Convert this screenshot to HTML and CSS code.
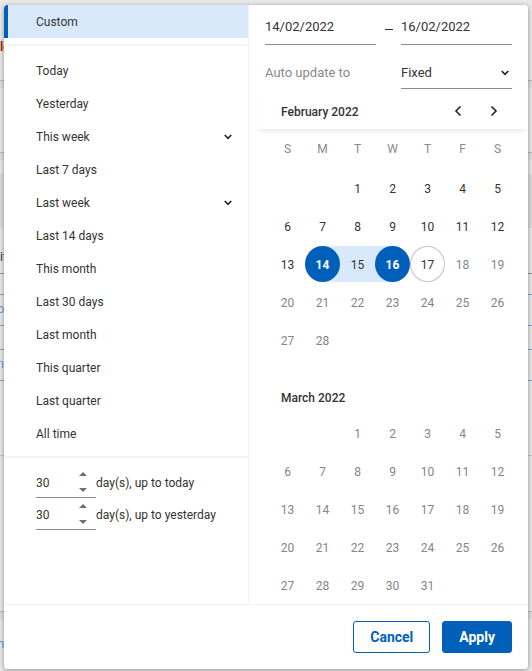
FILE: index.html
```html
<!DOCTYPE html>
<html lang="en">
<head>
<meta charset="utf-8">
<title>Date range</title>
<link rel="stylesheet" href="styles.css">
</head>
<body>
<div class="page" aria-hidden="true">
  <div class="card card-summary"><span class="peek peek-red">le</span></div>
  <div class="card card-filter"></div>
  <div class="card card-table">
    <div class="table-bar"></div>
    <div class="table-head"><span class="peek">it</span></div>
    <div class="chip"><span class="peek peek-blue">o</span></div>
    <div class="chip"><span class="peek peek-blue">n</span></div>
    <div class="table-foot"></div>
  </div>
  <div class="card card-last"><span class="peek peek-blue">h</span></div>
</div>

<div class="dialog" role="dialog" aria-label="Date range">
  <div class="panels">
    <div class="presets">
      <button class="preset selected" type="button">Custom</button>
      <div class="preset-list">
        <button class="preset" type="button">Today</button>
        <button class="preset" type="button">Yesterday</button>
        <button class="preset" type="button">This week<svg class="chevron" viewBox="0 0 8 6"><path d="M0.7 1L4 4.3L7.3 1"/></svg></button>
        <button class="preset" type="button">Last 7 days</button>
        <button class="preset" type="button">Last week<svg class="chevron" viewBox="0 0 8 6"><path d="M0.7 1L4 4.3L7.3 1"/></svg></button>
        <button class="preset" type="button">Last 14 days</button>
        <button class="preset" type="button">This month</button>
        <button class="preset" type="button">Last 30 days</button>
        <button class="preset" type="button">Last month</button>
        <button class="preset" type="button">This quarter</button>
        <button class="preset" type="button">Last quarter</button>
        <button class="preset" type="button">All time</button>
      </div>
      <div class="relative-list">
        <div class="relative">
          <div class="stepper">
            <input id="days-today" type="number" value="30">
            <div class="steps">
              <button type="button" aria-label="More days"><svg viewBox="0 0 8 4"><path d="M0 4L4 0L8 4Z"/></svg></button>
              <button type="button" aria-label="Fewer days"><svg viewBox="0 0 8 4"><path d="M0 0H8L4 4Z"/></svg></button>
            </div>
          </div>
          <label for="days-today">day(s), up to today</label>
        </div>
        <div class="relative">
          <div class="stepper">
            <input id="days-yesterday" type="number" value="30">
            <div class="steps">
              <button type="button" aria-label="More days"><svg viewBox="0 0 8 4"><path d="M0 4L4 0L8 4Z"/></svg></button>
              <button type="button" aria-label="Fewer days"><svg viewBox="0 0 8 4"><path d="M0 0H8L4 4Z"/></svg></button>
            </div>
          </div>
          <label for="days-yesterday">day(s), up to yesterday</label>
        </div>
      </div>
    </div>

    <div class="picker">
      <div class="fields">
        <input class="date" type="text" value="14/02/2022" aria-label="Start date">
        <span class="dash"></span>
        <input class="date" type="text" value="16/02/2022" aria-label="End date">
        <label class="update-label" for="update">Auto update to</label>
        <div class="select">
          <select id="update"><option>Fixed</option></select>
          <svg class="chevron" viewBox="0 0 8 6"><path d="M0.7 1L4 4.3L7.3 1"/></svg>
        </div>
      </div>
      <div class="calendar">
        <div class="month-bar">
          <h2>February 2022</h2>
          <button type="button" aria-label="Previous month"><svg viewBox="0 0 8 12"><path d="M6.5 1.5L2 6L6.5 10.5"/></svg></button>
          <button type="button" aria-label="Next month"><svg viewBox="0 0 8 12"><path d="M1.5 1.5L6 6L1.5 10.5"/></svg></button>
        </div>
        <table>
          <thead><tr><th>S</th><th>M</th><th>T</th><th>W</th><th>T</th><th>F</th><th>S</th></tr></thead>
          <tbody>
            <tr><td></td><td></td><td><button>1</button></td><td><button>2</button></td><td><button>3</button></td><td><button>4</button></td><td><button>5</button></td></tr>
            <tr><td><button>6</button></td><td><button>7</button></td><td><button>8</button></td><td><button>9</button></td><td><button>10</button></td><td><button>11</button></td><td><button>12</button></td></tr>
            <tr><td><button>13</button></td><td><div class="range-start"><button class="picked">14</button></div></td><td><button class="between">15</button></td><td><div class="range-end"><button class="picked">16</button></div></td><td><button class="today">17</button></td><td><button disabled>18</button></td><td><button disabled>19</button></td></tr>
            <tr><td><button disabled>20</button></td><td><button disabled>21</button></td><td><button disabled>22</button></td><td><button disabled>23</button></td><td><button disabled>24</button></td><td><button disabled>25</button></td><td><button disabled>26</button></td></tr>
            <tr><td><button disabled>27</button></td><td><button disabled>28</button></td><td></td><td></td><td></td><td></td><td></td></tr>
          </tbody>
        </table>
        <h2 class="next-month">March 2022</h2>
        <table>
          <tbody>
            <tr><td></td><td></td><td><button disabled>1</button></td><td><button disabled>2</button></td><td><button disabled>3</button></td><td><button disabled>4</button></td><td><button disabled>5</button></td></tr>
            <tr><td><button disabled>6</button></td><td><button disabled>7</button></td><td><button disabled>8</button></td><td><button disabled>9</button></td><td><button disabled>10</button></td><td><button disabled>11</button></td><td><button disabled>12</button></td></tr>
            <tr><td><button disabled>13</button></td><td><button disabled>14</button></td><td><button disabled>15</button></td><td><button disabled>16</button></td><td><button disabled>17</button></td><td><button disabled>18</button></td><td><button disabled>19</button></td></tr>
            <tr><td><button disabled>20</button></td><td><button disabled>21</button></td><td><button disabled>22</button></td><td><button disabled>23</button></td><td><button disabled>24</button></td><td><button disabled>25</button></td><td><button disabled>26</button></td></tr>
            <tr><td><button disabled>27</button></td><td><button disabled>28</button></td><td><button disabled>29</button></td><td><button disabled>30</button></td><td><button disabled>31</button></td><td></td><td></td></tr>
          </tbody>
        </table>
      </div>
    </div>
  </div>
  <div class="actions">
    <button class="action" type="button">Cancel</button>
    <button class="action primary" type="button">Apply</button>
  </div>
</div>
</body>
</html>
```
FILE: styles.css
```css
* {
  box-sizing: border-box;
}

body {
  margin: 0;
  padding: 5px 4px 2px;
  position: relative;
  overflow: hidden;
  background: #dedede;
  color: #333;
  font: 12px/16px Roboto, sans-serif;
}

button,
input,
select {
  margin: 0;
  padding: 0;
  border: 0;
  border-radius: 0;
  background: none;
  color: inherit;
  font: inherit;
  outline: 0;
}

svg {
  display: block;
  fill: none;
  stroke: #222;
  stroke-width: 1.6;
}

.chevron {
  width: 8px;
  height: 6px;
}

/* Page behind the dialog */
.page {
  position: absolute;
  inset: 0;
  z-index: -1;
  display: flex;
  flex-direction: column;
  gap: 8px;
}

.card {
  background: #e9e9e9;
  box-shadow: 0 1px 1px #bdbdbd;
}

.card-summary {
  height: 80px;
  padding-top: 39px;
}

.card-filter {
  height: 64px;
}

.card-table {
  height: 451px;
}

.table-bar {
  height: 68px;
  border-top: 14px solid #e9e9e9;
  background: #dcdcdc;
}

.table-head {
  height: 46px;
  margin-bottom: 20px;
  padding-top: 21px;
  border-bottom: 1px solid #999;
}

.chip {
  height: 32px;
  margin-bottom: 23px;
  padding-top: 6px;
  border: solid #7fa6cf;
  border-width: 1px 0;
}

.table-foot {
  height: 52px;
  border-bottom: 1px solid #c4c4c4;
}

.card-last {
  flex: 1;
  padding-top: 17px;
}

.peek {
  display: block;
  color: #333;
}

.peek-red {
  color: #a02020;
  font-weight: 700;
}

.peek-blue {
  display: flex;
  justify-content: flex-end;
  width: 4px;
  color: #6f9dce;
}

/* Dialog */
.dialog {
  border-radius: 4px;
  overflow: hidden;
  background: #fff;
}

.page::after {
  content: "";
  position: absolute;
  inset: 5px 4px 2px;
  border-radius: 4px;
  box-shadow: 0 1px 5px rgba(0, 0, 0, 0.4);
}

.panels {
  display: grid;
  grid-template-columns: 245fr 279fr;
  border-bottom: 1px solid #f2f2f2;
}

.presets {
  border-right: 1px solid #f2f2f2;
}

.preset {
  display: flex;
  align-items: center;
  justify-content: space-between;
  width: 100%;
  height: 33px;
  padding: 0 16px 0 32px;
  text-align: left;
}

.preset.selected {
  padding-left: 28px;
  border-left: 4px solid #005fb8;
  background: #d8e9fb;
}

.preset-list {
  margin-top: 6px;
  padding: 8px 0 6px;
  border: solid #f5f5f5;
  border-width: 2px 0;
}

.relative-list {
  padding: 8px 30px 8px 32px;
}

.relative {
  display: flex;
  align-items: center;
  height: 32px;
}

.relative label {
  padding-top: 2px;
}

.stepper {
  display: flex;
  width: 60px;
  height: 32px;
  border-bottom: 1px solid #8c8c8c;
}

.stepper input {
  width: 42px;
  padding-top: 2px;
  appearance: textfield;
}

.stepper input::-webkit-inner-spin-button {
  appearance: none;
}

.steps {
  display: flex;
  flex-direction: column;
  justify-content: space-between;
  padding: 5px 0 4px;
}

.steps button {
  padding: 1px 0;
}

.steps svg {
  width: 10px;
  height: 4px;
  fill: #707070;
  stroke: none;
}

.picker {
  padding-left: 8px;
}

.fields {
  display: grid;
  grid-template-columns: 1fr 25px 1fr;
  padding: 4px 16px 0 8px;
  font-size: 13px;
}

.date {
  width: 100%;
  height: 36px;
  border-bottom: 1px solid #8c8c8c;
}

.dash {
  align-self: center;
  justify-self: center;
  width: 8px;
  height: 1px;
  margin-top: 5px;
  background: #333;
}

.update-label {
  grid-column: 1 / 3;
  padding-top: 20px;
  color: #8a8a8a;
}

.select {
  position: relative;
  height: 44px;
  padding-top: 12px;
  border-bottom: 1px solid #8c8c8c;
}

.select select {
  width: 100%;
  height: 31px;
  appearance: none;
}

.select .chevron {
  position: absolute;
  top: 25px;
  right: 3px;
  pointer-events: none;
}

.month-bar {
  display: flex;
  align-items: center;
  height: 36px;
  margin-top: 4px;
  padding: 0 16px 0 24px;
  box-shadow: 0 4px 6px -3px rgba(0, 0, 0, 0.12);
}

h2 {
  flex: 1;
  margin: 0;
  padding-top: 2px;
  font-size: 12px;
  font-weight: 500;
}

.month-bar button {
  display: flex;
  align-items: center;
  justify-content: center;
  width: 36px;
  height: 36px;
}

.month-bar svg {
  width: 8px;
  height: 12px;
}

.next-month {
  margin-top: 19px;
  padding: 12px 24px 8px;
}

table {
  width: calc(100% - 26px);
  margin: 0 13px;
  table-layout: fixed;
  border-collapse: collapse;
}

th {
  height: 40px;
  padding: 0;
  color: #8a8a8a;
  font-weight: 400;
}

td {
  height: 38px;
  padding: 1px 0;
}

td button {
  display: block;
  width: 100%;
  height: 36px;
  padding-top: 2px;
}

td button:disabled {
  color: #858585;
}

.picked {
  border-radius: 50%;
  background: #005fb8;
  color: #fff;
  font-weight: 700;
}

.between {
  background: #d8e9fb;
}

.range-start {
  background: linear-gradient(to right, transparent 50%, #d8e9fb 50%);
}

.range-end {
  background: linear-gradient(to left, transparent 50%, #d8e9fb 50%);
}

.today {
  border: 1px solid #c4c4c4;
  border-radius: 50%;
}

.actions {
  display: flex;
  justify-content: flex-end;
  gap: 12px;
  padding: 16px;
}

.action {
  height: 32px;
  padding: 0 16px;
  border: 1px solid #005fb8;
  border-radius: 3px;
  color: #005fb8;
  font-size: 14px;
  font-weight: 700;
}

.action.primary {
  background: #005fb8;
  color: #fff;
}
```
